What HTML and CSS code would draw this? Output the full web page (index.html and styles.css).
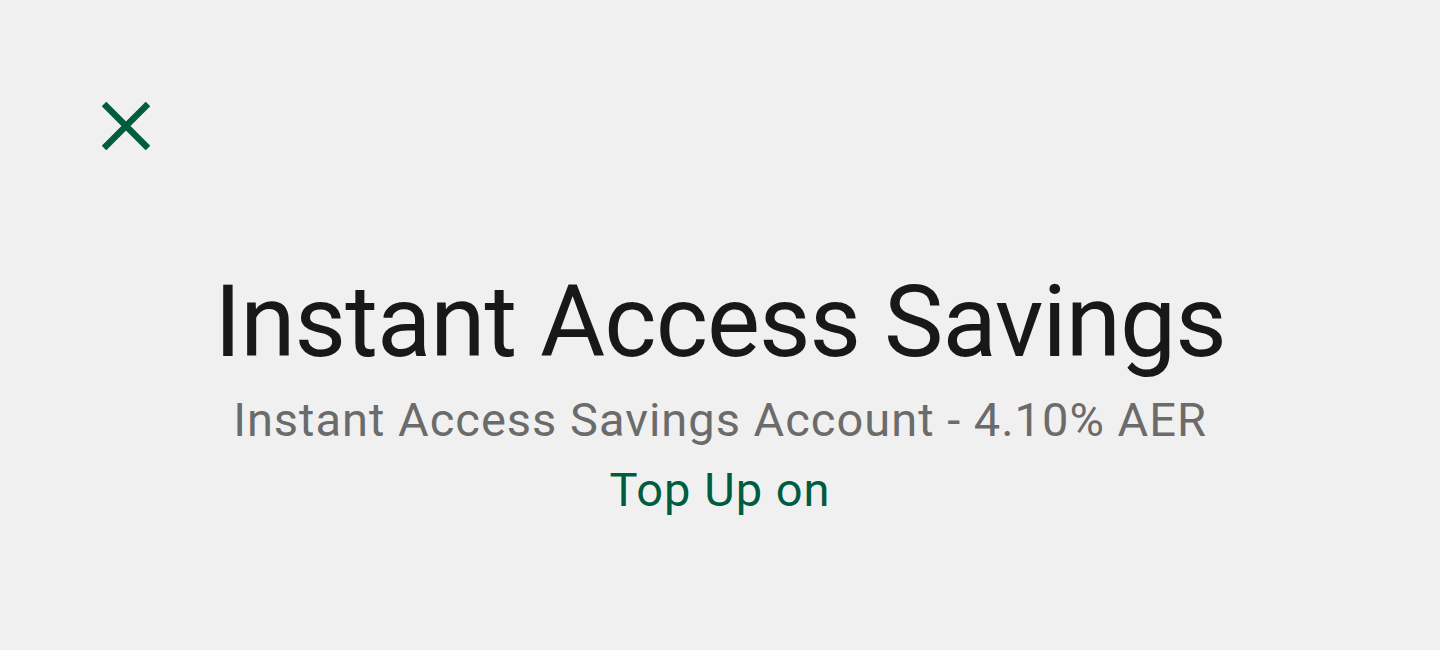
FILE: index.html
```html
<!DOCTYPE html>
<html lang="en">
<head>
<meta charset="UTF-8">
<meta name="viewport" content="width=device-width, initial-scale=1.0">
<title>Instant Access Savings</title>
<link rel="stylesheet" href="styles.css">
</head>
<body>

<!-- Top bar -->
<div class="top-bar">
    <button class="close-btn" aria-label="Close">
        <svg width="48" height="48" viewBox="0 0 48 48">
            <path d="M2 2 L46 46 M46 2 L2 46" stroke="#005c3e" stroke-width="6.5" fill="none"/>
        </svg>
    </button>
</div>

<!-- Account header -->
<div class="account">
    <h1>Instant Access Savings</h1>
    <p class="account-desc">Instant Access Savings Account - 4.10% AER</p>
    <a href="#" class="top-up">Top Up on</a>
</div>

</body>
</html>
```

FILE: styles.css
```css
/* General Styles */
* {
    margin: 0;
    padding: 0;
    box-sizing: border-box;
}

body {
    background: #f0f0f0;
    font-family: Roboto, 'Liberation Sans', sans-serif;
    height: 100vh;
    overflow: hidden;
}

/* Top bar */
.top-bar {
    padding: 102px 0 0 102px;
    height: 150px;
}

.close-btn {
    background: none;
    border: none;
    width: 48px;
    height: 48px;
    display: block;
    cursor: pointer;
}

.close-btn svg {
    display: block;
}

/* Account header */
.account {
    display: flex;
    flex-direction: column;
    align-items: center;
    text-align: center;
    padding-top: 112px;
}

h1 {
    font-size: 100px;
    font-weight: 400;
    color: #171818;
    line-height: 120px;
    letter-spacing: -1px;
}

.account-desc {
    font-size: 47px;
    color: #6b6b6b;
    line-height: 70px;
    letter-spacing: 1px;
    margin-top: 3px;
}

.top-up {
    font-size: 47px;
    color: #005c3e;
    text-decoration: none;
    line-height: 70px;
    letter-spacing: 1px;
}
```
